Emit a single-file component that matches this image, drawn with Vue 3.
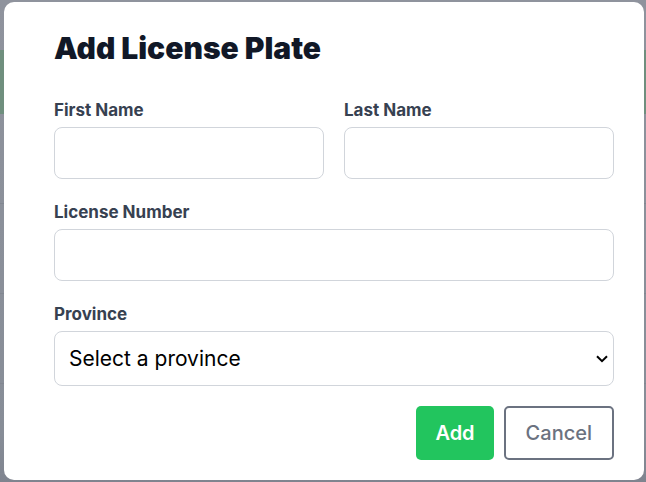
<script setup>
import { reactive } from 'vue'

const form = reactive({
  firstName: '',
  lastName: '',
  licenseNumber: '',
  province: '',
})
</script>

<template>
  <div class="page">
    <div class="backdrop" aria-hidden="true">
      <div class="backdrop-top"></div>
      <div class="backdrop-head"></div>
      <div v-for="n in 5" :key="n" class="backdrop-row"></div>
    </div>
    <main class="modal" role="dialog" aria-labelledby="modal-title">
      <h2 id="modal-title" class="title">Add License Plate</h2>
      <form class="form" @submit.prevent>
        <div class="pair">
          <div class="field">
            <label for="first-name">First Name</label>
            <input id="first-name" v-model="form.firstName" type="text" />
          </div>
          <div class="field">
            <label for="last-name">Last Name</label>
            <input id="last-name" v-model="form.lastName" type="text" />
          </div>
        </div>
        <div class="field">
          <label for="license-number">License Number</label>
          <input id="license-number" v-model="form.licenseNumber" type="text" />
        </div>
        <div class="field">
          <label for="province">Province</label>
          <div class="select-wrap">
            <select id="province" v-model="form.province">
              <option value="">Select a province</option>
            </select>
            <svg class="chevron" viewBox="0 0 12 8" aria-hidden="true">
              <path d="M1 1.2 L6 6.2 L11 1.2" fill="none" stroke="#000" stroke-width="2" />
            </svg>
          </div>
        </div>
        <div class="actions">
          <button type="submit" class="btn btn-add">Add</button>
          <button type="button" class="btn btn-cancel">Cancel</button>
        </div>
      </form>
    </main>
  </div>
</template>

<style>
body {
  margin: 0;
}
</style>

<style scoped>
.page {
  position: relative;
  box-sizing: border-box;
  display: flex;
  min-height: 100vh;
  padding: 2px 2px 2px 4px;
  overflow: hidden;
  background: linear-gradient(#8f939d, #878d97 90%, #7f848f);
  font-family: Inter, "Noto Sans", sans-serif;
}
.backdrop {
  position: absolute;
  inset: 0;
}
.backdrop-top {
  height: 50px;
}
.backdrop-head {
  height: 64px;
  background: #6f8f7e;
}
.backdrop-row {
  box-sizing: border-box;
  height: 90px;
  border-bottom: 1px solid #828791;
}
.modal {
  position: relative;
  box-sizing: border-box;
  flex: 1;
  padding: 28px 30px 20px 50px;
  border-radius: 10px;
  background: #fff;
}
.title {
  margin: 0 0 31px;
  color: #111827;
  font-size: 30px;
  font-weight: 900;
  line-height: 36px;
}
.form {
  display: flex;
  flex-direction: column;
  gap: 20px;
}
.pair {
  display: grid;
  grid-template-columns: 1fr 1fr;
  gap: 20px;
}
.field {
  display: flex;
  flex-direction: column;
  gap: 4px;
  min-width: 0;
}
label {
  color: #374151;
  font-size: 17px;
  font-weight: 700;
  line-height: 26px;
}
input,
select {
  box-sizing: border-box;
  width: 100%;
  height: 52px;
  margin: 0;
  padding: 0 14px;
  border: 1px solid #d1d5db;
  border-radius: 8px;
  background: #fff;
  color: #000;
  font-family: inherit;
  font-size: 21px;
}
select {
  display: block;
  height: 55px;
  appearance: none;
}
.select-wrap {
  position: relative;
}
.chevron {
  position: absolute;
  top: 24px;
  right: 6px;
  width: 12px;
  height: 8px;
  pointer-events: none;
}
.actions {
  display: flex;
  justify-content: flex-end;
  gap: 10px;
}
.btn {
  box-sizing: border-box;
  height: 54px;
  padding: 0 20px;
  border: 0;
  border-radius: 5px;
  font-family: inherit;
  font-size: 20px;
}
.btn-add {
  padding: 0 19px;
  background: #22c55e;
  color: #fff;
  font-weight: 600;
}
.btn-cancel {
  border: 2px solid #6b7280;
  background: #fff;
  color: #6b7280;
  font-weight: 500;
}
</style>
